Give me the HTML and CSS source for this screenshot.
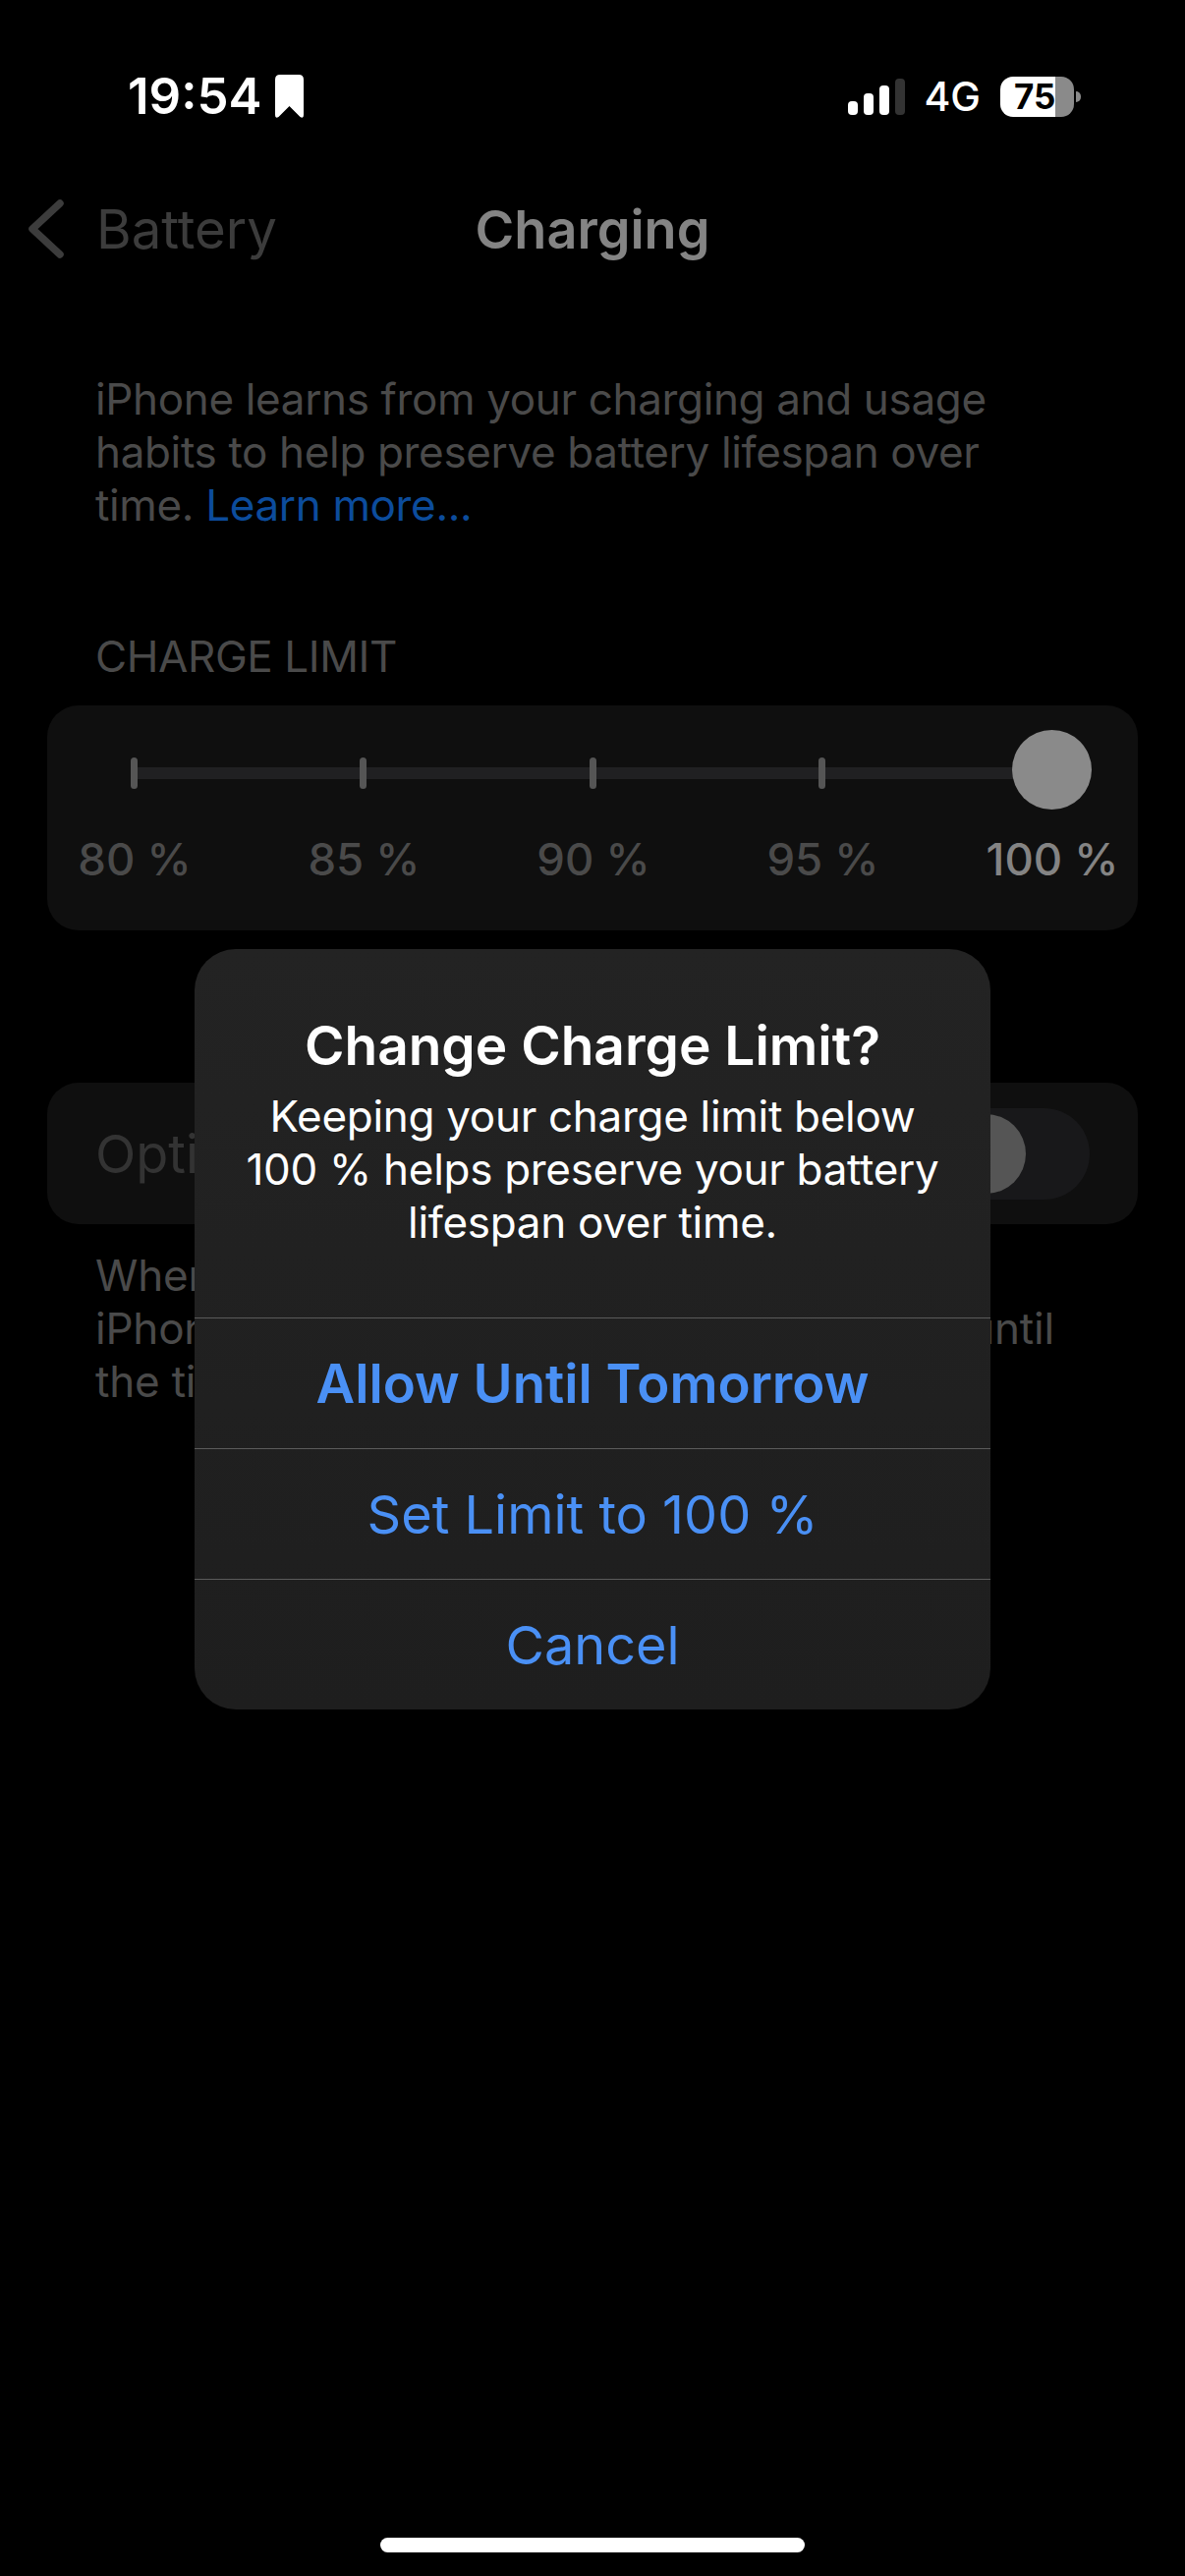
FILE: index.html
```html
<!DOCTYPE HTML>
<html>
<head>
    <meta charset="utf-8">
    <title>Charging</title>
    <link rel="stylesheet" href="styles.css">
</head>
<body>
<div class="screen">
    <div class="status-bar">
        <div class="status-left">
            <span class="time">19:54</span>
            <svg class="bookmark" width="29" height="44" viewBox="0 0 29 44">
                <path d="M5 0H24Q29 0 29 5V41Q29 45 25.500 43L14.500 32L3.500 43Q0 45 0 41V5Q0 0 5 0Z" fill="#fff"/>
            </svg>
        </div>
        <div class="status-right">
            <div class="signal">
                <span class="bar bar1"></span>
                <span class="bar bar2"></span>
                <span class="bar bar3"></span>
                <span class="bar bar4"></span>
            </div>
            <span class="network">4G</span>
            <div class="battery">
                <div class="battery-body"><span>75</span></div>
                <span class="battery-cap"></span>
            </div>
        </div>
    </div>

    <div class="nav">
        <svg class="chevron" width="38" height="62" viewBox="0 0 38 62">
            <path d="M33 5L5 31L33 57" fill="none" stroke="#3c3c3c" stroke-width="7.500" stroke-linecap="round" stroke-linejoin="round"/>
        </svg>
        <span class="nav-back">Battery</span>
        <span class="nav-title">Charging</span>
    </div>

    <p class="intro">iPhone learns from your charging and usage<br>habits to help preserve battery lifespan over<br>time. <span class="link">Learn more...</span></p>

    <div class="section-label">CHARGE LIMIT</div>
    <div class="card slider">
        <div class="ticks">
            <div class="tick-cell"><span class="tick"></span></div>
            <div class="tick-cell"><span class="tick"></span></div>
            <div class="tick-cell"><span class="tick"></span></div>
            <div class="tick-cell"><span class="tick"></span></div>
            <div class="tick-cell"><span class="knob"></span></div>
        </div>
        <div class="labels">
            <span>80 %</span>
            <span>85 %</span>
            <span>90 %</span>
            <span>95 %</span>
            <span class="current">100 %</span>
        </div>
    </div>

    <div class="card toggle-row">
        <span class="toggle-label">Optimized</span>
        <div class="switch"><span class="switch-knob"></span></div>
    </div>
    <p class="footnote">When Optimized Battery Charging is active,<br>iPhone will delay charging to beyond 80 % until<br>the time you need to use it.</p>

    <div class="home-indicator"></div>

    <div class="alert">
        <div class="alert-text">
            <div class="alert-title">Change Charge Limit?</div>
            <div class="alert-body">Keeping your charge limit below<br>100 % helps preserve your battery<br>lifespan over time.</div>
        </div>
        <div class="alert-btn primary">Allow Until Tomorrow</div>
        <div class="alert-btn">Set Limit to 100 %</div>
        <div class="alert-btn">Cancel</div>
    </div>
</div>
</body>
</html>
```

FILE: styles.css
```css
html, body {
    margin: 0;
    background-color: #000;
}
body {
    font-family: Inter, "Liberation Sans", sans-serif;
}
.screen {
    position: relative;
    width: 1206px;
    height: 2622px;
    overflow: hidden;
    background-color: #000;
}

/* status bar */
.status-bar {
    display: flex;
    justify-content: space-between;
    align-items: center;
    height: 44px;
    padding: 76px 106px 0 130px;
}
.status-left {
    display: flex;
    align-items: center;
    gap: 13px;
}
.time {
    font-size: 51px;
    font-weight: 600;
    line-height: 44px;
    color: #fff;
}
.status-right {
    display: flex;
    align-items: center;
}
.signal {
    display: flex;
    align-items: flex-end;
    gap: 6px;
    height: 37px;
    margin-right: 19px;
}
.bar {
    width: 10px;
    border-radius: 4px;
    background-color: #fff;
}
.bar1 { height: 14px; }
.bar2 { height: 22px; }
.bar3 { height: 30px; }
.bar4 { height: 37px; background-color: #333; }
.network {
    font-size: 41px;
    font-weight: 500;
    color: #fff;
    line-height: 44px;
    margin-right: 20px;
}
.battery {
    display: flex;
    align-items: center;
    gap: 2px;
}
.battery-body {
    width: 75px;
    height: 41px;
    border-radius: 13px;
    background: linear-gradient(to right, #fff 56px, #8a8a8a 56px);
    text-align: center;
    font-size: 35px;
    font-weight: 700;
    line-height: 41px;
    color: #000;
    box-sizing: border-box;
    padding-right: 19px;
    padding-left: 14px;
}
.battery-cap {
    width: 5px;
    height: 11px;
    border-radius: 0 5px 5px 0;
    background-color: #8a8a8a;
}

/* nav */
.nav {
    position: relative;
    display: flex;
    align-items: center;
    height: 62px;
    margin-top: 82px;
    padding-left: 28px;
}
.nav-back {
    margin-left: 32px;
    font-size: 54.500px;
    color: #3c3c3c;
}
.nav-title {
    position: absolute;
    left: 0;
    right: 0;
    text-align: center;
    font-size: 54px;
    font-weight: 600;
    color: #848484;
}

.intro {
    margin: 115px 0 0;
    padding-left: 97px;
    font-size: 44px;
    letter-spacing: -0.350px;
    line-height: 54px;
    color: #4a4a4a;
}
.link {
    color: #0c4c9c;
}
.section-label {
    margin-top: 100px;
    padding-left: 97px;
    font-size: 44px;
    letter-spacing: -0.400px;
    line-height: 54px;
    color: #4a4a4a;
}

.card {
    margin: 0 48px;
    background-color: #0f0f0f;
    border-radius: 32px;
}
.slider {
    margin-top: 23px;
    height: 229px;
    box-sizing: border-box;
}
.ticks, .labels {
    display: flex;
    justify-content: space-between;
}
.ticks {
    position: relative;
    height: 130px;
}
.ticks::before {
    content: "";
    position: absolute;
    left: 88px;
    right: 88px;
    top: 63px;
    height: 12px;
    background-color: #202022;
}
.tick-cell {
    position: relative;
    display: flex;
    justify-content: center;
    width: 176px;
    padding-top: 53px;
}
.tick {
    width: 7px;
    height: 32px;
    border-radius: 4px;
    background-color: #555;
}
.knob {
    width: 81px;
    height: 81px;
    margin-top: -28px;
    border-radius: 50%;
    background-color: #8a8a8a;
}
.labels {
    font-size: 45.500px;
    font-weight: 500;
    line-height: 54px;
    color: #4a4a4a;
}
.labels span {
    width: 174px;
    padding-left: 2px;
    text-align: center;
}
.labels .current {
    color: #848484;
}

.toggle-row {
    display: flex;
    justify-content: space-between;
    align-items: center;
    height: 144px;
    margin-top: 155px;
    padding: 0 49px;
    font-size: 54px;
    color: #333;
}
.switch {
    width: 150px;
    height: 93px;
    border-radius: 47px;
    background-color: #18181a;
}
.switch-knob {
    display: block;
    width: 81px;
    height: 81px;
    margin: 6px 0 0 4px;
    border-radius: 50%;
    background-color: #555;
}
.footnote {
    margin: 25px 0 0;
    padding-left: 97px;
    font-size: 44px;
    letter-spacing: -0.200px;
    line-height: 54px;
    color: #4a4a4a;
}

/* dialog */
.alert {
    position: absolute;
    left: 198px;
    top: 966px;
    width: 810px;
    height: 774px;
    display: flex;
    flex-direction: column;
    border-radius: 42px;
    overflow: hidden;
    background: linear-gradient(#232323, #1e1e1e);
}
.alert-text {
    height: 375px;
    box-sizing: border-box;
    padding-top: 66px;
    text-align: center;
    color: #fff;
}
.alert-title {
    font-size: 55px;
    font-weight: 600;
    line-height: 64px;
}
.alert-body {
    margin-top: 13px;
    font-size: 44px;
    letter-spacing: -0.300px;
    line-height: 54px;
}
.alert-btn {
    flex: 1;
    display: flex;
    justify-content: center;
    align-items: center;
    border-top: 1.500px solid #5a5a5a;
    font-size: 54px;
    color: #4a90f5;
}
.alert-btn.primary {
    font-size: 54.500px;
    font-weight: 600;
}

.home-indicator {
    position: absolute;
    left: 387px;
    top: 2583px;
    width: 432px;
    height: 15px;
    border-radius: 8px;
    background-color: #fff;
}
```
